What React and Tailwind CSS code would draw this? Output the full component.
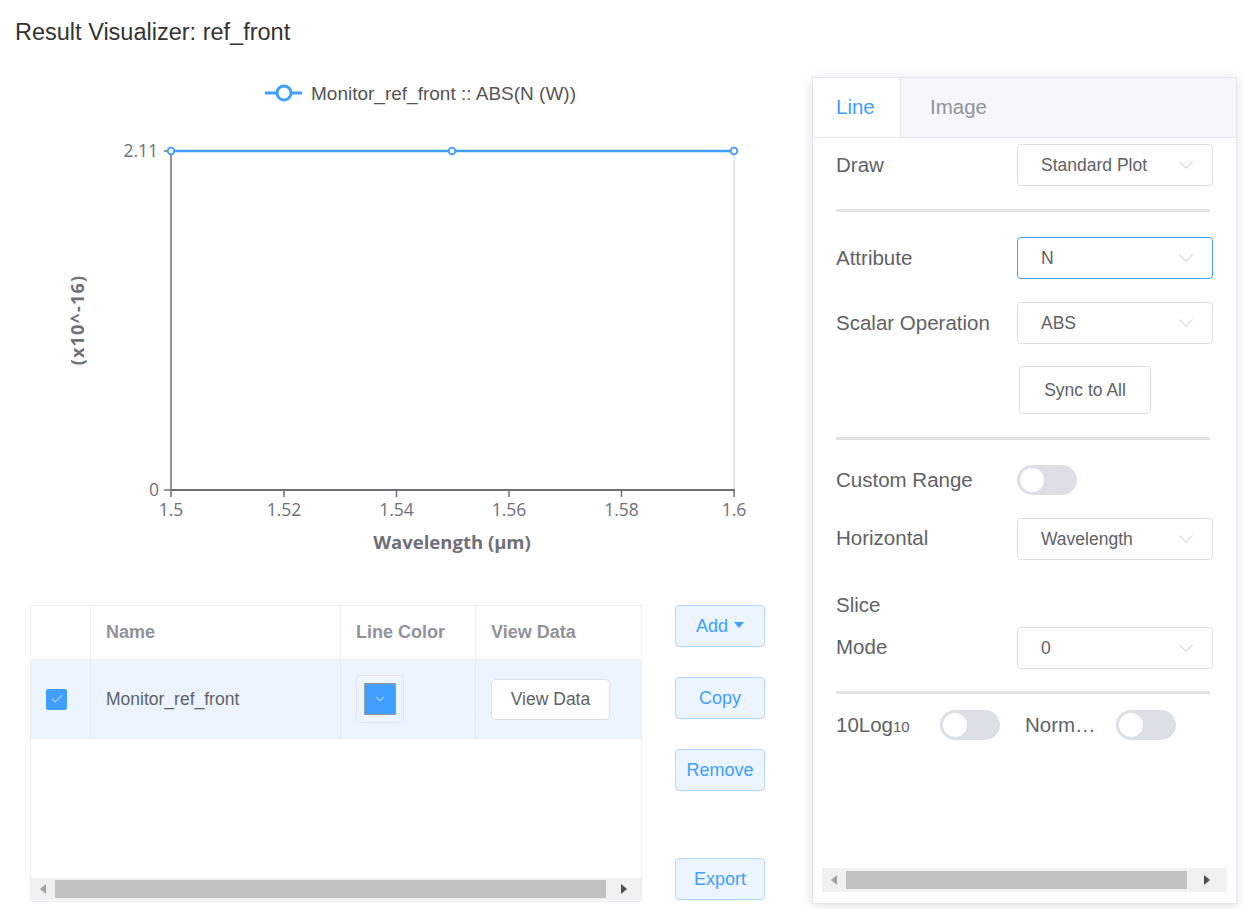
import { ChevronDown, Check } from "lucide-react";

const font = { fontFamily: '"Liberation Sans", Arial, sans-serif' };

function Chart() {
  const xs = [
    [171, "1.5"],
    [284, "1.52"],
    [396.5, "1.54"],
    [509, "1.56"],
    [621.5, "1.58"],
    [734, "1.6"],
  ];
  return (
    <svg width="790" height="500" viewBox="0 77 790 500" className="block">
      <line x1="265" x2="302" y1="93" y2="93" stroke="#409eff" strokeWidth="3" />
      <circle cx="284" cy="93" r="7" fill="#fff" stroke="#409eff" strokeWidth="3" />
      <text x="311" y="99.5" fontSize="19" fill="#555" fontFamily="Liberation Sans, Arial, sans-serif">
        Monitor_ref_front :: ABS(N (W))
      </text>

      <line x1="734" x2="734" y1="151" y2="490" stroke="#d0d0d0" strokeWidth="1" />
      <line x1="171" x2="171" y1="151" y2="490" stroke="#6e7079" strokeWidth="1.5" />
      <line x1="171" x2="735" y1="490" y2="490" stroke="#6e7079" strokeWidth="2" />
      <line x1="164" x2="171" y1="151" y2="151" stroke="#6e7079" strokeWidth="1.5" />
      <line x1="164" x2="171" y1="490" y2="490" stroke="#6e7079" strokeWidth="1.5" />
      <text x="158" y="157" fontSize="17.5" fill="#6e7079" textAnchor="end" fontFamily="Open Sans, sans-serif">
        2.11
      </text>
      <text x="159" y="496" fontSize="17.5" fill="#6e7079" textAnchor="end" fontFamily="Open Sans, sans-serif">
        0
      </text>
      {xs.map(([x, l]) => (
        <g key={l}>
          <line x1={x} x2={x} y1="490" y2="497" stroke="#6e7079" strokeWidth="1.5" />
          <text x={x} y="516" fontSize="17.5" fill="#6e7079" textAnchor="middle" fontFamily="Open Sans, sans-serif">
            {l}
          </text>
        </g>
      ))}
      <text x="452" y="549" fontSize="18.5" fontWeight="bold" fill="#6e7079" textAnchor="middle" fontFamily="Open Sans, sans-serif">
        Wavelength (µm)
      </text>
      <text
        x="0"
        y="0"
        fontSize="18"
        fontWeight="bold"
        letterSpacing="1.2"
        fill="#6e7079"
        textAnchor="middle"
        fontFamily="Open Sans, sans-serif"
        transform="translate(84 320) rotate(-90)"
      >
        (x10^-16)
      </text>

      <line x1="171" x2="734" y1="151" y2="151" stroke="#409eff" strokeWidth="2.5" />
      {[171, 452, 734].map((x) => (
        <circle key={x} cx={x} cy="151" r="3.3" fill="#fff" stroke="#409eff" strokeWidth="1.8" />
      ))}
    </svg>
  );
}

function ScrollBar({ className, endClass = "w-[40px]" }) {
  return (
    <div className={`flex items-center bg-[#f1f1f1] ${className}`}>
      <div className="flex w-[24px] justify-center">
        <svg width="6" height="10" viewBox="0 0 6 10">
          <path d="M6 0 L0 5 L6 10 Z" fill="#a3a3a3" />
        </svg>
      </div>
      <div className="h-[18px] flex-1 bg-[#c1c1c1]" />
      <div className={`flex justify-center ${endClass}`}>
        <svg width="6" height="10" viewBox="0 0 6 10">
          <path d="M0 0 L6 5 L0 10 Z" fill="#505050" />
        </svg>
      </div>
    </div>
  );
}

function Select({ value, active }) {
  return (
    <div
      className={`flex h-[42px] w-[196px] items-center justify-between rounded-[4px] border bg-white pl-[23px] pr-[13px] text-[17.5px] text-[#606266] ${
        active ? "border-[#409eff]" : "border-[#dcdfe6]"
      }`}
    >
      <span>{value}</span>
      <ChevronDown size={26} strokeWidth={0.9} color="#c0c4cc" />
    </div>
  );
}

function Switch() {
  return (
    <div className="flex h-[30px] w-[60px] items-center rounded-full bg-[#dcdfe6] px-[3px]">
      <div className="h-[24px] w-[24px] rounded-full bg-white" />
    </div>
  );
}

function Row({ label, children }) {
  return (
    <div className="flex items-center">
      <div className="w-[181px] text-[20.5px] text-[#606266]">{label}</div>
      {children}
    </div>
  );
}

function SideButton({ children, className = "" }) {
  return (
    <button
      type="button"
      className={`flex h-[42px] w-[90px] items-center justify-center rounded-[4px] border border-[#b3d8ff] bg-[#ecf5ff] text-[18px] text-[#409eff] ${className}`}
    >
      {children}
    </button>
  );
}

function Divider({ className }) {
  return <div className={`h-[3px] w-[374px] bg-[#e4e2e2] ${className}`} />;
}

export default function App() {
  return (
    <div className="h-[909px] w-[1243px] overflow-hidden bg-white text-[#303133]" style={font}>
      <div className="h-[77px] pl-[15px] pt-[18px] text-[23.5px] leading-[28px] text-[#333]">
        Result Visualizer: ref_front
      </div>

      <div className="flex items-start">
        <div className="w-[812px]">
          <Chart />

          <div className="mt-[28px] flex pl-[30px]">
            <div className="flex h-[297px] w-[612px] flex-col border border-[#ebeef5]">
              <div className="flex h-[54px] border-b border-[#ebeef5] text-[18px] font-bold text-[#909399]">
                <div className="w-[60px] border-r border-[#ebeef5]" />
                <div className="flex w-[250px] items-center border-r border-[#ebeef5] pl-[15px]">Name</div>
                <div className="flex w-[135px] items-center border-r border-[#ebeef5] pl-[15px]">Line Color</div>
                <div className="flex flex-1 items-center pl-[15px]">View Data</div>
              </div>
              <div className="flex h-[79px] border-b border-[#ebeef5] bg-[#ecf5ff] text-[17.5px] text-[#606266]">
                <div className="flex w-[60px] items-center border-r border-[#e3ebf5] pl-[15px]">
                  <div className="flex h-[21px] w-[21px] items-center justify-center rounded-[2px] bg-[#409eff]">
                    <Check size={14} strokeWidth={1.5} color="#fff" />
                  </div>
                </div>
                <div className="flex w-[250px] items-center border-r border-[#e3ebf5] pl-[15px]">Monitor_ref_front</div>
                <div className="flex w-[135px] items-center border-r border-[#e3ebf5] pl-[15px]">
                  <div className="flex h-[48px] w-[48px] items-center justify-center rounded-[4px] border border-[#e6e6e6]">
                    <div className="flex h-[32px] w-[32px] items-center justify-center border border-[#999] bg-[#409eff]">
                      <ChevronDown size={14} strokeWidth={1.5} color="#fff" />
                    </div>
                  </div>
                </div>
                <div className="flex flex-1 items-center pl-[15px]">
                  <button
                    type="button"
                    className="flex h-[41px] w-[119px] items-center justify-center rounded-[4px] border border-[#dcdfe6] bg-white text-[17.5px] text-[#606266]"
                  >
                    View Data
                  </button>
                </div>
              </div>
              <div className="flex-1" />
              <ScrollBar className="mb-px h-[22px]" endClass="w-[35px]" />
            </div>

            <div className="ml-[33px] flex h-[295px] w-[90px] flex-col">
              <SideButton>
                Add
                <span className="ml-[6px] mb-[3px] inline-block border-x-[5px] border-t-[6px] border-x-transparent border-t-[#409eff]" />
              </SideButton>
              <SideButton className="mt-[30px]">Copy</SideButton>
              <SideButton className="mt-[30px]">Remove</SideButton>
              <SideButton className="mt-auto">Export</SideButton>
            </div>
          </div>
        </div>

        <div className="flex h-[827px] w-[425px] flex-col border border-[#e4e7ed] bg-white shadow-[0_2px_12px_0_rgba(0,0,0,0.12)]">
          <div className="flex h-[60px] border-b border-[#e4e7ed] bg-[#f5f7fa] text-[20.5px]">
            <div className="flex w-[88px] items-center border-r border-[#e4e7ed] bg-white pl-[23px] text-[#409eff]">Line</div>
            <div className="flex items-center pl-[29px] text-[#909399]">Image</div>
          </div>

          <div className="flex flex-col pl-[23px] pt-[6px]">
            <Row label="Draw">
              <Select value="Standard Plot" />
            </Row>
            <Divider className="mt-[23px]" />
            <div className="mt-[25px]">
              <Row label="Attribute">
                <Select value="N" active />
              </Row>
            </div>
            <div className="mt-[23px]">
              <Row label="Scalar Operation">
                <Select value="ABS" />
              </Row>
            </div>
            <button
              type="button"
              className="ml-[183px] mt-[22px] flex h-[48px] w-[132px] items-center justify-center rounded-[4px] border border-[#dcdfe6] bg-white text-[17.5px] text-[#606266]"
            >
              Sync to All
            </button>
            <Divider className="mt-[23px]" />
            <div className="mt-[25px]">
              <Row label="Custom Range">
                <Switch />
              </Row>
            </div>
            <div className="mt-[22px]">
              <Row label="Horizontal">
                <Select value="Wavelength" />
              </Row>
            </div>
            <div className="mt-[33px] h-[24px] text-[20.5px] leading-[24px] text-[#606266]">Slice</div>
            <div className="mt-[10px]">
              <Row label="Mode">
                <Select value="0" />
              </Row>
            </div>
            <Divider className="mt-[22px]" />
            <div className="mt-[16px] flex items-center text-[20.5px] text-[#606266]">
              <div className="w-[104px]">
                10Log<span className="text-[15px]">10</span>
              </div>
              <Switch />
              <div className="ml-[25px] w-[91px]">Norm…</div>
              <Switch />
            </div>
          </div>

          <ScrollBar className="mx-[9px] mb-[11px] mt-auto h-[24px]" />
        </div>
      </div>
    </div>
  );
}
